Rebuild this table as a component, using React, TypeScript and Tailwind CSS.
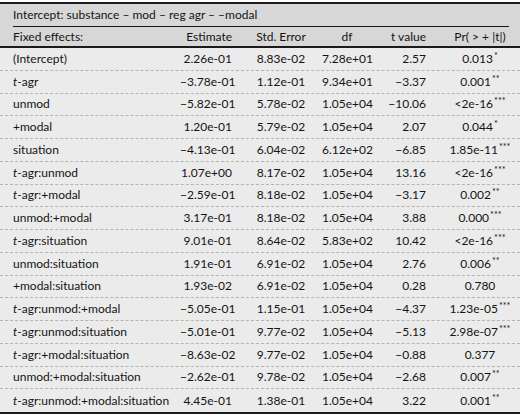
import React from 'react';

type Row = {
  term: React.ReactNode;
  est: string;
  se: string;
  df: string;
  t: string;
  p: string;
  stars?: string;
};

const T = () => <i>t</i>;

const rows: Row[] = [
  { term: '(Intercept)', est: '2.26e-01', se: '8.83e-02', df: '7.28e+01', t: '2.57', p: '0.013', stars: '*' },
  { term: <><T />-agr</>, est: '−3.78e-01', se: '1.12e-01', df: '9.34e+01', t: '−3.37', p: '0.001', stars: '**' },
  { term: 'unmod', est: '−5.82e-01', se: '5.78e-02', df: '1.05e+04', t: '−10.06', p: '<2e-16', stars: '***' },
  { term: '+modal', est: '1.20e-01', se: '5.79e-02', df: '1.05e+04', t: '2.07', p: '0.044', stars: '*' },
  { term: 'situation', est: '−4.13e-01', se: '6.04e-02', df: '6.12e+02', t: '−6.85', p: '1.85e-11', stars: '***' },
  { term: <><T />-agr:unmod</>, est: '1.07e+00', se: '8.17e-02', df: '1.05e+04', t: '13.16', p: '<2e-16', stars: '***' },
  { term: <><T />-agr:+modal</>, est: '−2.59e-01', se: '8.18e-02', df: '1.05e+04', t: '−3.17', p: '0.002', stars: '**' },
  { term: 'unmod:+modal', est: '3.17e-01', se: '8.18e-02', df: '1.05e+04', t: '3.88', p: '0.000', stars: '***' },
  { term: <><T />-agr:situation</>, est: '9.01e-01', se: '8.64e-02', df: '5.83e+02', t: '10.42', p: '<2e-16', stars: '***' },
  { term: 'unmod:situation', est: '1.91e-01', se: '6.91e-02', df: '1.05e+04', t: '2.76', p: '0.006', stars: '**' },
  { term: '+modal:situation', est: '1.93e-02', se: '6.91e-02', df: '1.05e+04', t: '0.28', p: '0.780' },
  { term: <><T />-agr:unmod:+modal</>, est: '−5.05e-01', se: '1.15e-01', df: '1.05e+04', t: '−4.37', p: '1.23e-05', stars: '***' },
  { term: <><T />-agr:unmod:situation</>, est: '−5.01e-01', se: '9.77e-02', df: '1.05e+04', t: '−5.13', p: '2.98e-07', stars: '***' },
  { term: <><T />-agr:+modal:situation</>, est: '−8.63e-02', se: '9.77e-02', df: '1.05e+04', t: '−0.88', p: '0.377' },
  { term: 'unmod:+modal:situation', est: '−2.62e-01', se: '9.78e-02', df: '1.05e+04', t: '−2.68', p: '0.007', stars: '**' },
  { term: <><T />-agr:unmod:+modal:situation</>, est: '4.45e-01', se: '1.38e-01', df: '1.05e+04', t: '3.22', p: '0.001', stars: '**' },
];

// column template shared by header and body rows
const cols = 'grid grid-cols-[180px_60px_82px_50px_68px_80px] items-center';

export default function App() {
  return (
    <div
      className="w-[520px] h-[420px] bg-white pt-[2px] text-[12px] leading-none whitespace-nowrap text-[#141414]"
      style={{ fontFamily: 'Lato, "Noto Sans", sans-serif' }}
    >
      <div className="border-t-2 border-[#1a1a1a] bg-[#d7d7d7]">
        <div className="h-[22px] flex items-center px-[13px]">
          Intercept: substance – mod – reg agr – –modal
        </div>
        <div className="ml-[13px] mr-[11px] h-px bg-[#1a1a1a]" />
        <div className={`${cols} h-[19px]`}>
          <div className="pl-[13px]">Fixed effects:</div>
          <div className="text-right pr-[8px]">Estimate</div>
          <div className="text-center">Std. Error</div>
          <div className="text-center">df</div>
          <div className="text-right pr-[14px]">t value</div>
          <div className="text-center">Pr( &gt;  + |t|)</div>
        </div>
      </div>
      <div className="border-t-2 border-b-2 border-[#1a1a1a] bg-[#ebebeb]">
        {rows.map((r, i) => (
          <div
            key={i}
            className={`${cols} h-[22.75px] ${i < rows.length - 1 ? 'border-b border-dashed border-[#b4b4b4]' : ''}`}
          >
            <div className="pl-[13px]">{r.term}</div>
            <div className="text-right pr-[8px]">{r.est}</div>
            <div className="text-center">{r.se}</div>
            <div className="text-center">{r.df}</div>
            <div className="text-right pr-[14px]">{r.t}</div>
            <div className="text-center">
              {r.p}
              {r.stars && <span className="relative -top-[4px] text-[9px] ml-px">{r.stars}</span>}
            </div>
          </div>
        ))}
      </div>
    </div>
  );
}
